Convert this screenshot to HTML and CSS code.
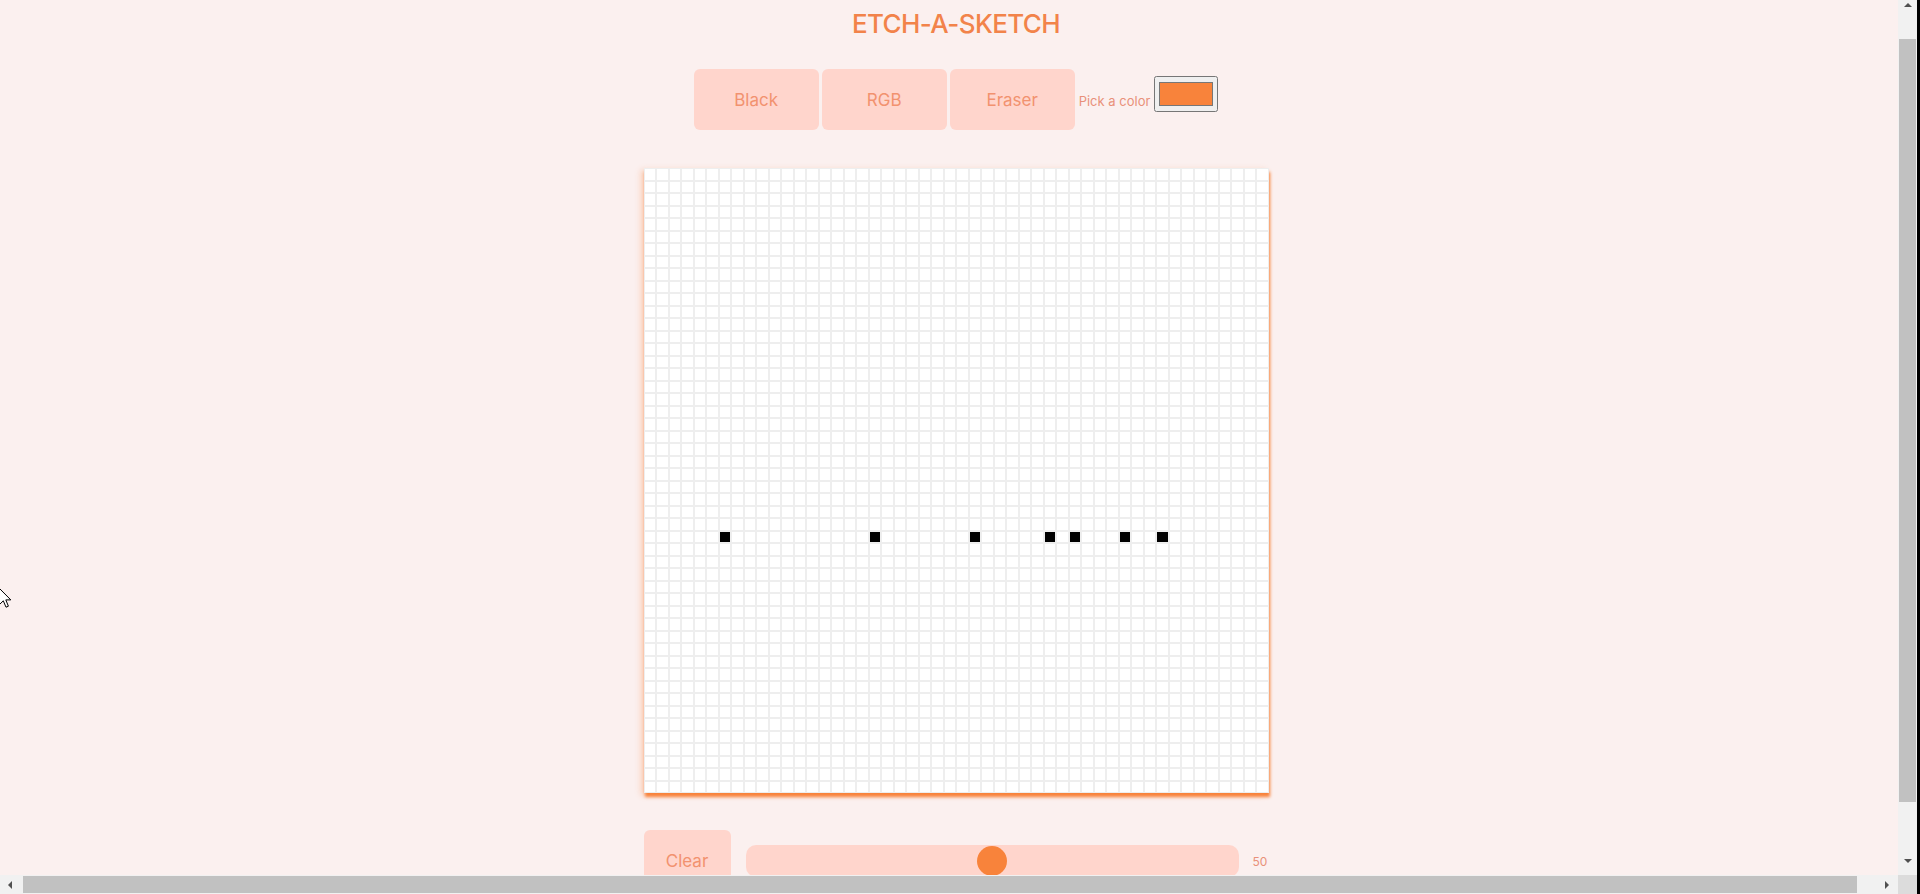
FILE: index.html
```html
<!DOCTYPE html>
<html lang="en">
<head>
<meta charset="utf-8">
<title>Etch-A-Sketch</title>
<link rel="stylesheet" href="styles.css">
</head>
<body>
<main class="page">
  <h1 class="title">ETCH-A-SKETCH</h1>
  <div class="controls">
    <button class="btn mode-btn" type="button">Black</button>
    <button class="btn mode-btn" type="button">RGB</button>
    <button class="btn mode-btn" type="button">Eraser</button>
    <label class="pick-label" for="picker">Pick a color</label>
    <input type="color" id="picker" class="picker" value="#f8833b">
  </div>
  <div class="board" id="board"></div>
  <div class="bottom">
    <button class="btn clear-btn" type="button">Clear</button>
    <input type="range" class="size-slider" min="0" max="100" value="50">
    <span class="size-value">50</span>
  </div>
</main>

<div class="vscroll" aria-hidden="true">
  <span class="arr arr-up"></span>
  <span class="vthumb"></span>
  <span class="arr arr-down"></span>
</div>
<div class="hscroll" aria-hidden="true">
  <span class="arr arr-left"></span>
  <span class="hthumb"></span>
  <span class="arr arr-right"></span>
</div>
<div class="sb-corner" aria-hidden="true"></div>
<div class="window-edge" aria-hidden="true"></div>

<svg class="cursor" width="13" height="21" viewBox="0 0 13 21" aria-hidden="true">
  <path d="M0.5 0.5 L0.5 16.5 L4.3 12.8 L7 19.2 L9.4 18.2 L6.8 11.9 L11.8 11.9 Z" fill="#fff" stroke="#000" stroke-width="1"/>
</svg>
<script src="script.js"></script>
</body>
</html>
```

FILE: styles.css
```css
html, body {
  margin: 0;
  height: 100%;
  overflow: hidden;
}

body {
  background: #fbf0ef;
  font-family: Inter, "Liberation Sans", sans-serif;
}

.page {
  width: 1912px;
  padding-top: 8px;
  display: flex;
  flex-direction: column;
  align-items: center;
}

.title {
  margin: 0;
  font-size: 26px;
  line-height: 32px;
  font-weight: 500;
  letter-spacing: -0.6px;
  color: #f2834a;
}

.controls {
  margin-top: 29px;
  height: 61px;
  display: flex;
  align-items: flex-start;
  gap: 3px;
}

.btn {
  border: none;
  border-radius: 6px;
  background: #ffd5cc;
  color: #f2926f;
  font-family: inherit;
  font-size: 17px;
  padding: 0;
}

.mode-btn {
  width: 125px;
  height: 61px;
}

.pick-label {
  margin: 24px 0 0 1px;
  font-size: 13px;
  line-height: 16px;
  color: #e9907a;
}

.picker {
  width: 64px;
  height: 36px;
  margin: 7px 0 0 1px;
  box-sizing: border-box;
}

.board {
  margin-top: 38px;
  width: 625px;
  height: 625px;
  display: grid;
  grid-template-columns: repeat(50, 1fr);
  grid-template-rows: repeat(50, 1fr);
  background: #fff;
  box-shadow: 1px 4px 3px #f8833b, -3px 2px 6px rgba(248, 131, 59, 0.3);
}

.cell {
  box-sizing: border-box;
  border: 1px solid #eeeeee;
  background: #fff;
}

.cell.filled {
  background: #000;
}

.bottom {
  margin-top: 37px;
  width: 625px;
  display: flex;
  align-items: center;
}

.clear-btn {
  flex: none;
  width: 87px;
  height: 62px;
}

.size-slider {
  -webkit-appearance: none;
  appearance: none;
  flex: none;
  width: 493px;
  height: 32px;
  margin: 0 0 0 15px;
  background: #ffd5cc;
  border-radius: 10px;
  outline: none;
}

.size-slider::-webkit-slider-thumb {
  -webkit-appearance: none;
  appearance: none;
  width: 30px;
  height: 30px;
  border-radius: 50%;
  background: #f8833b;
  border: none;
}

.size-value {
  margin-left: 14px;
  font-size: 12px;
  color: #e9907a;
}

/* browser window scrollbars drawn over the page */
.vscroll {
  position: fixed;
  top: 0;
  left: 1898px;
  width: 19px;
  height: 875px;
  background: #f1f1f1;
  display: flex;
  flex-direction: column;
  align-items: center;
}

.hscroll {
  position: fixed;
  left: 0;
  top: 875px;
  width: 1898px;
  height: 19px;
  background: #f1f1f1;
  display: flex;
  align-items: center;
}

.arr {
  width: 0;
  height: 0;
  flex: none;
}

.arr-up {
  margin-top: 3px;
  border-left: 4px solid transparent;
  border-right: 4px solid transparent;
  border-bottom: 4px solid #505050;
}

.arr-down {
  margin-top: auto;
  margin-bottom: 12px;
  border-left: 4px solid transparent;
  border-right: 4px solid transparent;
  border-top: 4px solid #505050;
}

.arr-left {
  margin-left: 8px;
  border-top: 4px solid transparent;
  border-bottom: 4px solid transparent;
  border-right: 4px solid #505050;
}

.arr-right {
  margin-left: auto;
  margin-right: 9px;
  border-top: 4px solid transparent;
  border-bottom: 4px solid transparent;
  border-left: 4px solid #505050;
}

.vthumb {
  flex: none;
  margin-top: 32px;
  width: 17px;
  height: 763px;
  background: #c1c1c1;
}

.hthumb {
  flex: none;
  margin-left: 11px;
  width: 1834px;
  height: 17px;
  background: #c1c1c1;
}

.sb-corner {
  position: fixed;
  left: 1898px;
  top: 875px;
  width: 19px;
  height: 19px;
  background: #dcdcdc;
}

.window-edge {
  position: fixed;
  top: 0;
  right: 0;
  width: 3px;
  height: 100%;
  background: #000;
}

.cursor {
  position: fixed;
  left: -1px;
  top: 588px;
}
```

FILE: script.js
```js
const board = document.getElementById('board');
const filled = new Set([6, 18, 26, 32, 34, 38, 41].map(c => 29 * 50 + c));
const frag = document.createDocumentFragment();
for (let i = 0; i < 2500; i++) {
  const cell = document.createElement('div');
  cell.className = filled.has(i) ? 'cell filled' : 'cell';
  frag.appendChild(cell);
}
board.appendChild(frag);
```
